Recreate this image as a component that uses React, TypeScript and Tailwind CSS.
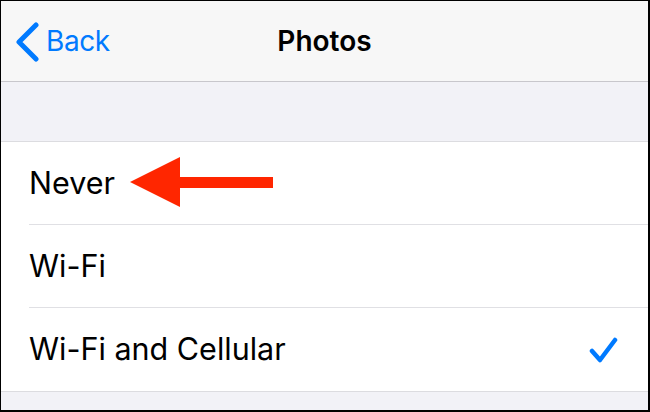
import React from 'react';

const rows = ['Never', 'Wi-Fi', 'Wi-Fi and Cellular'];

const App: React.FC = () => {
    return (
        <div
            className="w-[650px] h-[412px] bg-[#f2f2f7] border-l border-t border-r-2 border-b-2 border-black overflow-hidden"
            style={{ fontFamily: 'Inter, "Liberation Sans", sans-serif' }}
        >
            <div className="relative h-[81px] bg-[#f7f7f7] border-b border-[#c8c7cc] flex items-center">
                <div className="flex items-center pl-[13px] text-[#007aff]">
                    <svg width="26" height="40" viewBox="0 0 26 40" className="mt-[2px]">
                        <path d="M22 3 L5 20 L22 37" fill="none" stroke="#007aff" strokeWidth="5" strokeLinecap="round" strokeLinejoin="round" />
                    </svg>
                    <span className="ml-[6px] text-[28px] leading-none tracking-[-0.4px]">Back</span>
                </div>
                <div className="absolute inset-0 flex items-center justify-center text-[28px] font-semibold text-black leading-none">
                    Photos
                </div>
            </div>

            <div className="h-[60px] border-b border-[#dcdce0]" />

            <div className="bg-white border-b border-[#dcdce0]">
                {rows.map((label, i) => (
                    <div key={label} className="relative pl-[28px]">
                        <div className={`h-[83px] flex items-center justify-between pr-[30px] ${i < rows.length - 1 ? 'border-b border-[#e0e0e4]' : ''}`}>
                            <span className="text-[30.5px] text-black leading-none">{label}</span>
                            {i === rows.length - 1 && (
                                <svg width="30" height="30" viewBox="0 0 30 30" className="mt-[4px]">
                                    <path d="M4 14 L12 23 L27 3" fill="none" stroke="#007aff" strokeWidth="4.5" strokeLinecap="round" strokeLinejoin="round" />
                                </svg>
                            )}
                        </div>
                        {i === 0 && (
                            <svg width="150" height="54" viewBox="0 0 150 54" className="absolute left-[128px] top-[14px]">
                                <polygon points="1,26 51,1 51,51" fill="#ff2600" />
                                <rect x="50" y="21" width="94" height="11" fill="#ff2600" />
                            </svg>
                        )}
                    </div>
                ))}
            </div>
        </div>
    );
};

export default App;
